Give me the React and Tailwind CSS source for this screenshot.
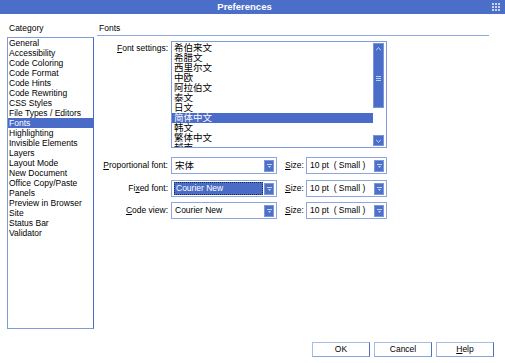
import React from 'react'

const categories = [
  'General', 'Accessibility', 'Code Coloring', 'Code Format', 'Code Hints', 'Code Rewriting',
  'CSS Styles', 'File Types / Editors', 'Fonts', 'Highlighting', 'Invisible Elements', 'Layers',
  'Layout Mode', 'New Document', 'Office Copy/Paste', 'Panels', 'Preview in Browser', 'Site',
  'Status Bar', 'Validator',
]

const encodings = ['希伯来文', '希腊文', '西里尔文', '中欧', '阿拉伯文', '泰文', '日文', '简体中文', '韩文', '繁体中文', '越南']

function GridIcon() {
  return (
    <svg width="8" height="8" viewBox="0 0 8 8">
      {[0, 3, 6].map(y => [0, 3, 6].map(x => (
        <rect key={x + '-' + y} x={x} y={y} width="2" height="2" fill="#c9d5f2" />
      )))}
    </svg>
  )
}

function DropArrow() {
  return (
    <svg width="5" height="4" viewBox="0 0 5 4">
      <rect x="0" y="0" width="5" height="1" fill="#c3d0f0" />
      <path d="M1 2h3L2.5 4z" fill="#c3d0f0" />
    </svg>
  )
}

function Dropdown({ value, width, selected, cjk }) {
  return (
    <div className={`${width} h-[17px] border border-[#8ea6dc] bg-white flex items-center p-[1px]`}>
      <div className="flex-1 h-full flex items-center pl-[1px] pr-[1px]">
        {selected ? (
          <div className="h-[13px] w-full bg-[#4a6cc6] text-white border border-dotted border-[#1b2a55] flex items-center pl-[1px] leading-none">
            {value}
          </div>
        ) : (
          <span className={`pl-[1px] leading-none whitespace-pre ${cjk ? 'text-[9.5px]' : ''}`}>{value}</span>
        )}
      </div>
      <div className="w-[10px] h-[12px] bg-[#4d70c8] border border-[#7d97da] flex items-center justify-center mr-[1px]">
        <DropArrow />
      </div>
    </div>
  )
}

function Label({ children, className = '' }) {
  return <div className={`w-[72px] text-right pr-[1px] leading-none ${className}`}>{children}</div>
}

function FontRow({ label, value, selected, cjk, className = '' }) {
  return (
    <div className={`flex items-center ${className}`}>
      <Label>{label}</Label>
      <div className="ml-[2px]">
        <Dropdown value={value} width="w-[106px]" selected={selected} cjk={cjk} />
      </div>
      <div className="ml-[8px] w-[21px] leading-none">
        <span className="underline">S</span>ize:
      </div>
      <Dropdown value="10 pt  ( Small )" width="w-[81px]" />
    </div>
  )
}

function Button({ children }) {
  return (
    <div className="w-[58px] h-[15px] bg-white border border-[#a9bce6] border-r-[#4d6fc6] border-b-[#8aa3dc] flex items-center justify-center leading-none">
      {children}
    </div>
  )
}

export default function App() {
  return (
    <div className="w-[505px] h-[363px] bg-white flex flex-col overflow-hidden text-[8.5px] text-black font-['Liberation_Sans','Noto_Sans_CJK_SC',sans-serif]">
      {/* title bar */}
      <div className="h-[14px] bg-[#4b6ec8] relative flex items-center justify-center">
        <span className="text-white font-bold text-[9.5px] leading-none ml-[-16px]">Preferences</span>
        <div className="absolute right-[5px] top-[3px]">
          <GridIcon />
        </div>
      </div>

      <div className="flex h-[315px]">
        {/* category column */}
        <div className="w-[97px] pl-[7px] pt-[8px] flex flex-col">
          <div className="h-[12px] leading-[12px] pl-[2px]">Category</div>
          <div className="mt-[3px] w-[87px] h-[292px] border border-[#7f9ddc] border-r-[#4a6cc8]">
            {categories.map(c => (
              <div
                key={c}
                className={`h-[10px] leading-[10px] pl-[1px] whitespace-nowrap ${c === 'Fonts' ? 'bg-[#4a6cc8] text-white' : ''}`}
              >
                {c}
              </div>
            ))}
          </div>
        </div>

        {/* fonts panel */}
        <div className="flex-1 pt-[8px] pr-[16px] flex flex-col">
          <div className="h-[14px] leading-[12px] pl-[2px] border-b border-[#8ea8e2]">Fonts</div>

          <div className="flex mt-[5px]">
            <Label className="pt-[3px]">
              <span className="underline">F</span>ont settings:
            </Label>
            <div className="ml-[2px] w-[216px] h-[107px] border border-[#7f9ddc] bg-white flex overflow-hidden">
              <div className="flex-1 pt-[1px] text-[9.5px] overflow-hidden">
                {encodings.map(e => (
                  <div
                    key={e}
                    className={`h-[10px] leading-[10px] pl-[2px] ${e === '简体中文' ? 'bg-[#4a6cc8] text-white' : ''}`}
                  >
                    {e}
                  </div>
                ))}
              </div>
              <div className="w-[13px] flex flex-col py-[1px] pr-[2px]">
                <div className="h-[65px] bg-[#4a6dc8] border border-[#7b95d8] flex flex-col items-center">
                  <svg width="5" height="4" viewBox="0 0 5 4" className="mt-[3px]">
                    <path d="M0 3.5L2.5 0.5L5 3.5" stroke="#c3d0f0" strokeWidth="1" fill="none" />
                  </svg>
                  <div className="flex-1 flex items-center">
                    <svg width="5" height="6" viewBox="0 0 5 6">
                      <rect x="0" y="0" width="5" height="1" fill="#c3d0f0" />
                      <rect x="0" y="2" width="5" height="1" fill="#c3d0f0" />
                      <rect x="0" y="4" width="5" height="1" fill="#c3d0f0" />
                    </svg>
                  </div>
                </div>
                <div className="flex-1" />
                <div className="h-[11px] bg-[#4a6dc8] border border-[#7b95d8] flex items-center justify-center">
                  <svg width="5" height="4" viewBox="0 0 5 4">
                    <path d="M0 0.5L2.5 3.5L5 0.5" stroke="#c3d0f0" strokeWidth="1" fill="none" />
                  </svg>
                </div>
              </div>
            </div>
          </div>

          <FontRow
            className="mt-[9px]"
            label={<><span className="underline">P</span>roportional font:</>}
            value="宋体"
            cjk
          />
          <FontRow
            className="mt-[6px]"
            label={<>Fi<span className="underline">x</span>ed font:</>}
            value="Courier New"
            selected
          />
          <FontRow
            className="mt-[5px]"
            label={<><span className="underline">C</span>ode view:</>}
            value="Courier New"
          />
        </div>
      </div>

      {/* buttons */}
      <div className="flex justify-end gap-[4px] pr-[11px] mt-[13px]">
        <Button>OK</Button>
        <Button>Cancel</Button>
        <Button>
          <span><span className="underline">H</span>elp</span>
        </Button>
      </div>
    </div>
  )
}
